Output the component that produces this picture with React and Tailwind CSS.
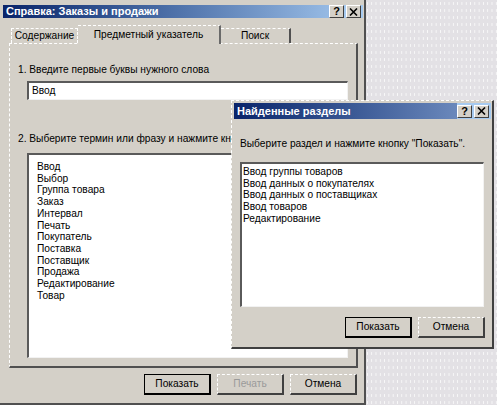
const TERMS = [
  "Ввод", "Выбор", "Группа товара", "Заказ", "Интервал", "Печать",
  "Покупатель", "Поставка", "Поставщик", "Продажа", "Редактирование", "Товар",
];

const TOPICS = [
  "Ввод группы товаров",
  "Ввод данных о покупателях",
  "Ввод данных о поставщиках",
  "Ввод товаров",
  "Редактирование",
];

function TitleButton({ children }) {
  return (
    <div className="flex h-[13px] w-[15px] items-center justify-center border border-solid border-t-white border-l-white border-r-[#404040] border-b-[#404040] bg-[#d4d0c8] text-[11px] leading-none font-bold text-black">
      {children}
    </div>
  );
}

function CloseIcon() {
  return (
    <svg width="9" height="8" viewBox="0 0 9 8">
      <path d="M1 0.5 L8 7.5 M8 0.5 L1 7.5" stroke="#000" strokeWidth="1.6" />
    </svg>
  );
}

function TitleBar({ title, gradient, className }) {
  return (
    <div className={`flex items-center justify-between pl-[3px] ${gradient} ${className}`}>
      <span className="text-[11px] font-bold text-white">{title}</span>
      <div className="flex h-full items-center gap-[2px] bg-[#a6caf0] pr-[2px]">
        <TitleButton>?</TitleButton>
        <TitleButton><CloseIcon /></TitleButton>
      </div>
    </div>
  );
}

function Button({ children, focused, disabled }) {
  const edge = focused
    ? "border-black border-r-2 border-b-2"
    : "border-t-white border-l-white border-r-[#404040] border-b-[#404040] border-r-2 border-b-2 [border-top-style:dashed] [border-left-style:dashed]";
  return (
    <div className={`flex h-[21px] w-[67px] items-center justify-center border text-[10.2px] ${edge} ${disabled ? "text-[#9a9a9a]" : "text-black"}`}>
      {children}
    </div>
  );
}

function ListBox({ items, className }) {
  return (
    <div className={`border-2 border-r border-b border-[#5a5a5a] border-r-[#f2f2f2] border-b-[#f2f2f2] bg-white text-[10.2px] leading-[11.7px] text-black ${className}`}>
      {items.map(t => <div key={t}>{t}</div>)}
    </div>
  );
}

export default function App() {
  return (
    <div className="relative h-[405px] w-[497px] overflow-hidden bg-[#e3e1e5] bg-[radial-gradient(#fafafa_0.6px,transparent_0.8px)] bg-[length:4.3px_7px] font-['Liberation_Sans',Arial,sans-serif]">
      {/* main help window */}
      <div className="flex h-[405px] w-[366px] flex-col border-r-2 border-b-2 border-[#505050] bg-[#d4d0c8] pt-[5px] pl-[3px]">
        <TitleBar title="Справка: Заказы и продажи" gradient="bg-gradient-to-r from-[#0a246a] to-[#a6caf0]" className="mr-[1px] h-[13px]" />

        <div className="mt-[7px] ml-[8px] flex h-[18px] items-end text-[10.2px] text-black">
          <div className="flex h-[15px] w-[67px] items-center justify-center border-t border-r border-l border-dashed border-white">Содержание</div>
          <div className="relative z-10 -mb-px flex h-[19px] w-[143px] items-center justify-center border-t border-r-2 border-[#6a6a6a] border-t-white bg-[#d4d0c8] [border-top-style:dashed]">Предметный указатель</div>
          <div className="flex h-[15px] w-[70px] items-center justify-center border-t border-r-2 border-[#505050] border-t-white [border-top-style:dashed]">Поиск</div>
        </div>

        <div className="ml-[6px] flex h-[325px] w-[349px] flex-col border-t border-r-2 border-b-2 border-l border-[#505050] border-t-white border-l-white pt-[19px] pl-[8px] text-[10.2px] text-black [border-left-style:dashed] [border-top-style:dashed]">
          <div className="h-[13px] leading-[13px]">1. Введите первые буквы нужного слова</div>
          <div className="mt-[5px] ml-[9px] flex h-[19px] w-[321px] items-center border-2 border-r border-b border-[#5a5a5a] border-r-[#f2f2f2] border-b-[#f2f2f2] bg-white pl-[3px]">Ввод</div>
          <div className="mt-[32px] h-[13px] w-[213px] overflow-hidden leading-[13px] whitespace-nowrap">2. Выберите термин или фразу и нажмите кнопку "Показать"</div>
          <ListBox items={TERMS} className="mt-[8px] ml-[9px] h-[205px] w-[321px] pt-[6px] pl-[8px]" />
        </div>

        <div className="mt-[6px] ml-[141px] flex gap-[6px]">
          <Button focused>Показать</Button>
          <Button disabled>Печать</Button>
          <Button>Отмена</Button>
        </div>
      </div>

      {/* found topics dialog, floats over the help window */}
      <div className="absolute top-[100px] left-[231px] flex h-[249px] w-[263px] flex-col border border-r-2 border-b-2 border-[#404040] border-t-white border-l-white bg-[#d4d0c8] pt-[2px] pl-[2px] [border-left-style:dashed] [border-top-style:dashed]">
        <TitleBar title="Найденные разделы" gradient="bg-gradient-to-r from-[#0a246a] to-[#7b98c8]" className="mr-[1px] h-[16px]" />
        <div className="mt-[18px] ml-[6px] h-[13px] text-[10.2px] leading-[13px] text-black">Выберите раздел и нажмите кнопку "Показать".</div>
        <ListBox items={TOPICS} className="mt-[12px] ml-[6px] h-[145px] w-[244px] pt-[2px] pl-[1px]" />
        <div className="mt-[10px] ml-[111px] flex gap-[6px]">
          <Button focused>Показать</Button>
          <Button>Отмена</Button>
        </div>
      </div>
    </div>
  );
}
